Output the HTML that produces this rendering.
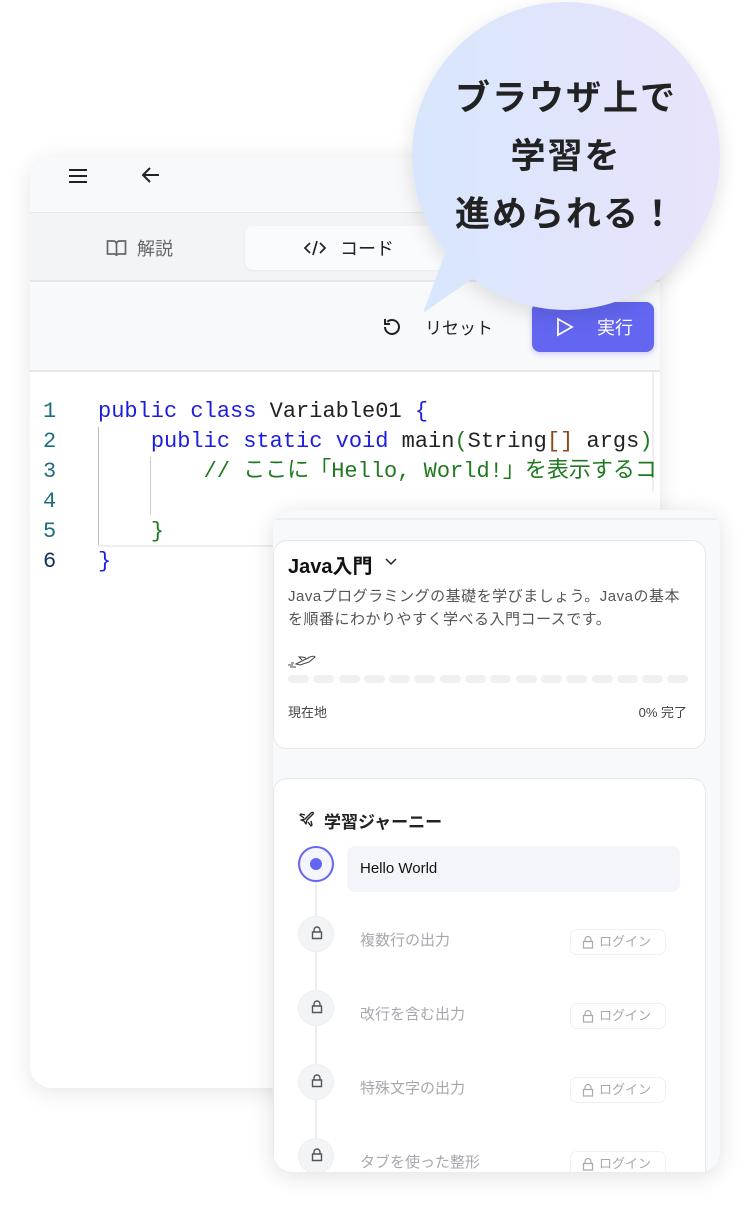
<!DOCTYPE html>
<html><head><meta charset="utf-8"><style>
*{margin:0;padding:0;box-sizing:border-box}
body{width:750px;height:1206px;background:#fff;position:relative;overflow:hidden;font-family:"Liberation Sans","Noto Sans CJK JP",sans-serif;color:#222}
.abs{position:absolute}
#left{left:30px;top:157px;width:630px;height:931px;background:#f8f9fb;border-radius:22px;box-shadow:0 4px 24px rgba(0,0,0,.10);overflow:hidden}
.code{font-family:"Liberation Mono","Noto Sans CJK JP",monospace;font-size:22px;white-space:pre;line-height:30px}
.kw{color:#1d1de0}.gr{color:#1f7a1f}
#right{left:273px;top:510px;width:447px;height:662px;background:#f8f9fb;border-radius:20px;box-shadow:0 4px 24px rgba(0,0,0,.12);overflow:hidden}
.card{position:absolute;left:0;width:433px;background:#fff;border:1px solid #e6e7ea;border-radius:14px}
.dash{display:inline-block;width:21px;height:8px;border-radius:4px;background:#eef0f2;margin-right:4.3px}
.step{position:absolute;left:24px;width:36px;height:36px;border-radius:50%;background:#f3f4f6;border:1px solid #eceef1}
.step svg{position:absolute;left:11px;top:9px}
.lt{position:absolute;left:86px;font-size:15px;color:#a6a8ad}
.login{position:absolute;left:296px;width:96px;height:26px;border:1px solid #f0f1f3;border-radius:7px;font-size:13px;color:#a6a8ad;line-height:24px;padding-left:28px}
.login svg{position:absolute;left:11px;top:6px}
</style></head><body>
<div id="left" class="abs">
  <div class="abs" style="left:0;top:0;width:630px;height:56px;border-bottom:1px solid #e5e7ea"></div>
  <svg class="abs" style="left:37px;top:9px" width="22" height="20" viewBox="0 0 22 20"><path d="M2 4h18M2 10h18M2 16h18" stroke="#222" stroke-width="2"/></svg>
  <svg class="abs" style="left:110px;top:8px" width="22" height="20" viewBox="0 0 22 20"><path d="M19 10H3M10 3L3 10l7 7" stroke="#222" stroke-width="2" fill="none"/></svg>
  <div class="abs" style="left:0;top:56px;width:630px;height:69px;background:#f3f4f6;border-bottom:2px solid #e5e7ea"></div>
  <svg class="abs" style="left:76px;top:82px" width="21" height="18" viewBox="0 0 21 18"><path d="M1.5 2h6a3 3 0 0 1 3 3v12a2 2 0 0 0-2-2h-7zM19.5 2h-6a3 3 0 0 0-3 3v12a2 2 0 0 1 2-2h7z" stroke="#666" stroke-width="1.7" fill="none"/></svg>
  <div class="abs" style="left:107px;top:78px;font-size:18px;color:#666">解説</div>
  <div class="abs" style="left:215px;top:69px;width:240px;height:44px;background:#fafbfc;border-radius:8px;box-shadow:0 1px 3px rgba(0,0,0,.05)"></div>
  <svg class="abs" style="left:274px;top:82px" width="22" height="18" viewBox="0 0 22 18"><path d="M6 4L1 9l5 5M16 4l5 5-5 5M13 2L9 16" stroke="#222" stroke-width="1.7" fill="none"/></svg>
  <div class="abs" style="left:310px;top:78px;font-size:18px;color:#222">コード</div>
  <svg class="abs" style="left:351px;top:159px" width="22" height="22" viewBox="0 0 22 22"><path d="M4 11a7 7 0 1 0 2.3-5.2M4 3v5h5" stroke="#222" stroke-width="2" fill="none"/></svg>
  <div class="abs" style="left:395px;top:157px;font-size:17px;color:#222">リセット</div>
  <div class="abs" style="left:502px;top:145px;width:122px;height:50px;background:#6366f1;border-radius:8px;box-shadow:0 2px 6px rgba(99,102,241,.3)"></div>
  <svg class="abs" style="left:526px;top:160px" width="18" height="20" viewBox="0 0 18 20"><path d="M2 2l14 8-14 8z" stroke="#fff" stroke-width="1.8" fill="none"/></svg>
  <div class="abs" style="left:567px;top:157px;font-size:18px;color:#fff">実行</div>
  <div class="abs" style="left:0;top:213px;width:630px;height:718px;background:#fff;border-top:2px solid #e5e7ea"></div>
  <div class="abs" style="left:622px;top:215px;width:2px;height:120px;background:#eee"></div>
  <div class="abs code" style="left:13px;top:240px;color:#1e6e80">1
2
3
4
5
<span style="color:#1a3060">6</span></div>
  <div class="abs" style="left:68px;top:270px;width:1px;height:118px;background:#bbb"></div>
  <div class="abs" style="left:120px;top:300px;width:1px;height:58px;background:#ccc"></div>
  <div class="abs" style="left:68px;top:388px;width:560px;height:2px;background:#eceef1"></div>
  <div class="abs code" style="left:68px;top:240px;color:#222"><span class="kw">public class</span> Variable01 <span class="kw">{</span>
    <span class="kw">public static void</span> main<span class="gr">(</span>String<span style="color:#8a4a1a">[]</span> args<span class="gr">)</span>
        <span class="gr">// ここに「Hello, World!」を表示するコ</span>

    <span class="gr">}</span>
<span class="kw">}</span></div>
</div>

<div class="abs" style="left:412px;top:2px;width:308px;height:308px;border-radius:50%;background:linear-gradient(90deg,#d8e6fd,#e8e4fb);box-shadow:0 6px 20px rgba(0,0,0,.12)"></div>
<svg class="abs" style="left:415px;top:240px" width="80" height="80" viewBox="0 0 80 80"><path d="M35 0L8 73L70 30z" fill="#d9e6fd"/></svg>
<div class="abs" style="left:412px;top:70px;width:308px;text-align:center;font-size:35px;font-weight:bold;line-height:58px;color:#222;letter-spacing:2px">ブラウザ上で<br>学習を<br>進められる！</div>

<div id="right" class="abs">
  <div class="abs" style="left:0;top:8px;width:447px;height:2px;background:#eceef1"></div>
  <div class="card" style="top:30px;height:209px">
    <div class="abs" style="left:14px;top:9px;font-size:20px;font-weight:bold;color:#111">Java入門</div>
    <svg class="abs" style="left:110px;top:16px" width="14" height="10" viewBox="0 0 14 10"><path d="M2 2l5 5 5-5" stroke="#222" stroke-width="1.5" fill="none"/></svg>
    <div class="abs" style="left:14px;top:44px;width:420px;font-size:15px;letter-spacing:0.5px;line-height:23px;color:#555;white-space:nowrap">Javaプログラミングの基礎を学びましょう。Javaの基本<br>を順番にわかりやすく学べる入門コースです。</div>
    <svg class="abs" style="left:14px;top:112px" width="30" height="16" viewBox="0 0 30 16"><path d="M8 11l14-7c2-1 5-1 5 0l-6 5-9 3zM14 7l-3-3h3l4 1M0 12h5M2 14h6M3 10h3" stroke="#444" stroke-width="1" fill="none"/></svg>
    <div class="abs" style="left:14px;top:134px;white-space:nowrap;font-size:0"><span class="dash"></span><span class="dash"></span><span class="dash"></span><span class="dash"></span><span class="dash"></span><span class="dash"></span><span class="dash"></span><span class="dash"></span><span class="dash"></span><span class="dash"></span><span class="dash"></span><span class="dash"></span><span class="dash"></span><span class="dash"></span><span class="dash"></span><span class="dash"></span></div>
    <div class="abs" style="left:14px;top:161px;font-size:13px;color:#444">現在地</div>
    <div class="abs" style="right:18px;top:161px;font-size:13px;color:#444">0% 完了</div>
  </div>
  <div class="card" style="top:268px;height:420px">
    <svg class="abs" style="left:24px;top:31px" width="18" height="18" viewBox="0 0 18 18"><path d="M3 10l4-1 6-6c1-1 3-1 2 1l-6 6-1 4-2-3-3-1zM7 5L3 4 2 5l4 3M13 11l1 4-1 1-3-4" stroke="#222" stroke-width="1.4" fill="none" stroke-linejoin="round"/></svg>
    <div class="abs" style="left:50px;top:29px;font-size:17px;font-weight:bold;color:#222">学習ジャーニー</div>
    <div class="abs" style="left:41px;top:90px;width:2px;height:330px;background:#eceef1"></div>
    <div class="abs" style="left:24px;top:67px;width:36px;height:36px;border-radius:50%;border:2px solid #6366f1;background:#f5f5ff"><div style="position:absolute;left:10px;top:10px;width:12px;height:12px;border-radius:50%;background:#6366f1"></div></div>
    <div class="abs" style="left:73px;top:67px;width:333px;height:46px;background:#f4f5fb;border-radius:8px;font-size:15px;color:#111;padding:14px 0 0 13px">Hello World</div>
    <div class="step" style="top:137px"><svg width="14" height="14" viewBox="0 0 14 14"><path d="M4 6V4a3 3 0 0 1 6 0v2M2.5 6h9v6.5h-9z" stroke="#555" stroke-width="1.4" fill="none"/></svg></div>
    <div class="step" style="top:211px"><svg width="14" height="14" viewBox="0 0 14 14"><path d="M4 6V4a3 3 0 0 1 6 0v2M2.5 6h9v6.5h-9z" stroke="#555" stroke-width="1.4" fill="none"/></svg></div>
    <div class="step" style="top:285px"><svg width="14" height="14" viewBox="0 0 14 14"><path d="M4 6V4a3 3 0 0 1 6 0v2M2.5 6h9v6.5h-9z" stroke="#555" stroke-width="1.4" fill="none"/></svg></div>
    <div class="step" style="top:359px"><svg width="14" height="14" viewBox="0 0 14 14"><path d="M4 6V4a3 3 0 0 1 6 0v2M2.5 6h9v6.5h-9z" stroke="#555" stroke-width="1.4" fill="none"/></svg></div>
    <div class="lt" style="top:150px">複数行の出力</div>
    <div class="lt" style="top:224px">改行を含む出力</div>
    <div class="lt" style="top:298px">特殊文字の出力</div>
    <div class="lt" style="top:372px">タブを使った整形</div>
    <div class="login" style="top:150px"><svg width="12" height="13" viewBox="0 0 12 13"><path d="M3 5.5V3.5a3 3 0 0 1 6 0v2M1.5 5.5h9v6.5h-9z" stroke="#aaa" stroke-width="1.2" fill="none"/></svg>ログイン</div>
    <div class="login" style="top:224px"><svg width="12" height="13" viewBox="0 0 12 13"><path d="M3 5.5V3.5a3 3 0 0 1 6 0v2M1.5 5.5h9v6.5h-9z" stroke="#aaa" stroke-width="1.2" fill="none"/></svg>ログイン</div>
    <div class="login" style="top:298px"><svg width="12" height="13" viewBox="0 0 12 13"><path d="M3 5.5V3.5a3 3 0 0 1 6 0v2M1.5 5.5h9v6.5h-9z" stroke="#aaa" stroke-width="1.2" fill="none"/></svg>ログイン</div>
    <div class="login" style="top:372px"><svg width="12" height="13" viewBox="0 0 12 13"><path d="M3 5.5V3.5a3 3 0 0 1 6 0v2M1.5 5.5h9v6.5h-9z" stroke="#aaa" stroke-width="1.2" fill="none"/></svg>ログイン</div>
  </div>
</div>
</body></html>
